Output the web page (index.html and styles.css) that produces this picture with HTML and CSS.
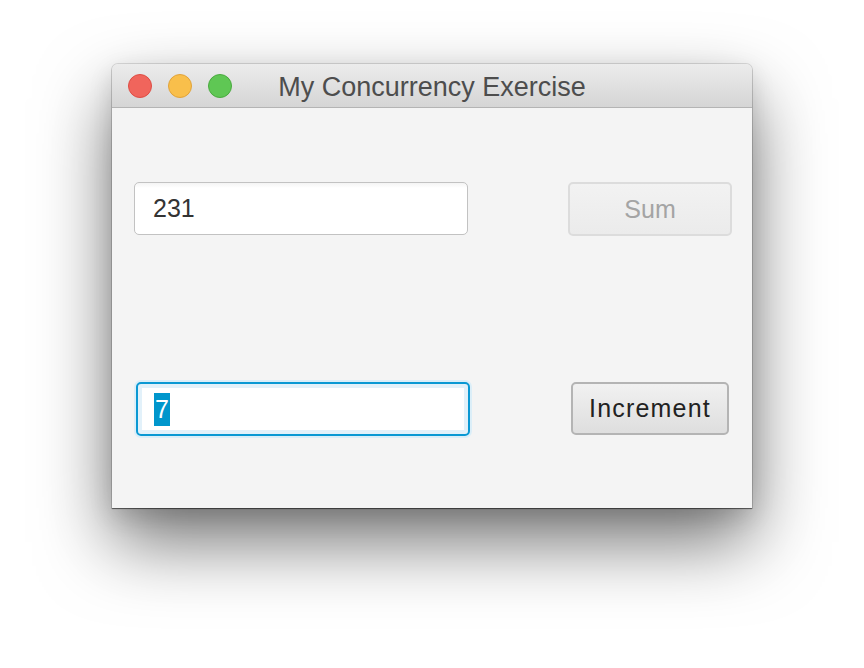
FILE: index.html
```html
<!DOCTYPE html>
<html>
<head>
<meta charset="utf-8">
<link rel="stylesheet" href="styles.css">
</head>
<body>
<div class="stage">
  <div class="window">
    <div class="titlebar">
      <div class="lights">
        <span class="light red"></span>
        <span class="light yellow"></span>
        <span class="light green"></span>
      </div>
      <div class="title">My Concurrency Exercise</div>
    </div>
    <div class="content">
      <div class="field"><span class="val">231</span></div>
      <div class="btn-cell"><div class="btn disabled">Sum</div></div>
      <div class="field focused"><span class="val"><span class="sel">7</span></span></div>
      <div class="btn-cell"><div class="btn inc">Increment</div></div>
    </div>
  </div>
</div>
</body>
</html>
```

FILE: styles.css
```css
html, body {
  margin: 0;
  padding: 0;
  background: #ffffff;
  width: 864px;
  height: 668px;
  overflow: hidden;
}
.stage {
  padding: 64px 0 0 112px;
}
.window {
  width: 640px;
  height: 444px;
  display: flex;
  flex-direction: column;
  border-radius: 6px 6px 0 0;
  background: #f4f4f4;
  box-shadow: 0 0 0 1px rgba(0,0,0,0.12), 0 1px 1px rgba(0,0,0,0.5), 0 34px 72px rgba(0,0,0,0.55), 0 8px 24px rgba(0,0,0,0.12);
  font-family: "Liberation Sans", Arial, sans-serif;
}
.titlebar {
  height: 43px;
  flex: none;
  position: relative;
  display: flex;
  align-items: center;
  justify-content: center;
  border-radius: 6px 6px 0 0;
  background: linear-gradient(#ececec, #d5d5d5);
  border-bottom: 1px solid #b4b4b4;
}
.lights {
  position: absolute;
  left: 16px;
  top: 10px;
  display: flex;
  gap: 16px;
}
.light {
  width: 24px;
  height: 24px;
  border-radius: 50%;
  box-sizing: border-box;
}
.red { background: #f0655c; border: 1px solid #de4d44; }
.yellow { background: #f9bf4b; border: 1px solid #e1a33a; }
.green { background: #5fc754; border: 1px solid #4aaa3f; }
.title {
  font-size: 27px;
  color: #4d4d4d;
  margin-top: 3px;
}
.content {
  flex: 1;
  display: grid;
  grid-template-columns: 334px 164px;
  grid-template-rows: 54px 54px;
  column-gap: 100px;
  row-gap: 146px;
  padding: 74px 0 0 22px;
}
.field {
  box-sizing: border-box;
  height: 53px;
  border: 1px solid #c2c2c2;
  border-radius: 5px;
  background: linear-gradient(#f4f4f4, #ffffff 5px);
  display: flex;
  align-items: center;
  padding-left: 18px;
  font-size: 25px;
  color: #333333;
}
.field.focused {
  margin-left: 2px;
  width: 334px;
  height: 54px;
  border: 2px solid #0a98d3;
  box-shadow: 0 0 0 2px #dbeef8, inset 0 0 0 4px #e2f1fa;
  background: #ffffff;
  padding-left: 16px;
}
.sel {
  background: #0096cc;
  color: #ffffff;
  display: inline-block;
  height: 33px;
  line-height: 33px;
  padding: 0 1px;
}
.btn-cell {
  display: flex;
  justify-content: center;
  align-items: flex-start;
}
.btn {
  box-sizing: border-box;
  height: 54px;
  border-radius: 5px;
  display: flex;
  align-items: center;
  justify-content: center;
  font-size: 25px;
}
.btn.disabled {
  width: 164px;
  border: 2px solid #dcdcdc;
  background: linear-gradient(#f2f2f2, #ebebeb);
  color: #a4a4a4;
}
.btn.inc {
  width: 158px;
  height: 53px;
  border: 2px solid #b4b4b4;
  background: linear-gradient(#f1f1f1, #dedede);
  color: #222222;
  letter-spacing: 1.2px;
}
```
